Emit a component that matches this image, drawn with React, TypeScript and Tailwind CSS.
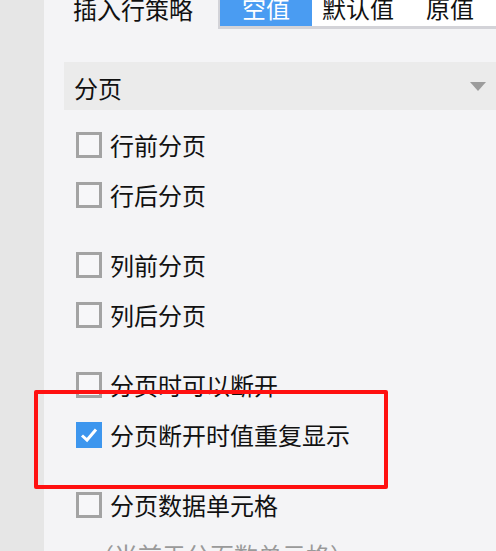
import React from 'react';

const font = { fontFamily: '"Noto Sans CJK SC", "Noto Sans", sans-serif' };

const CheckBox = ({ checked }: { checked?: boolean }) =>
    checked ? (
        <div className="w-[26px] h-[26px] bg-[#3d96ee] flex items-center justify-center flex-shrink-0">
            <svg width="18" height="16" viewBox="0 0 18 16">
                <path d="M2 8.5 L7 13 L16 2.5" stroke="white" strokeWidth="3" fill="none" />
            </svg>
        </div>
    ) : (
        <div className="w-[26px] h-[26px] border-[3px] border-[#a3a3a3] bg-[#f7f7f9] flex-shrink-0" />
    );

const Row = ({ label, checked }: { label: string; checked?: boolean }) => (
    <div className="h-[50px] flex items-center pl-[32px]">
        <CheckBox checked={checked} />
        <span className="ml-[8px] text-[24px] leading-[24px] text-[#111]">{label}</span>
    </div>
);

const Tabs = () => {
    const tabs = ['空值', '默认值', '原值'];
    return (
        <div className="ml-auto flex border-l-2 border-b-[3px] border-[#d3d3d8] bg-white">
            {tabs.map((t, i) => (
                <div
                    key={t}
                    className={
                        i === 0
                            ? 'w-[92px] h-[37px] flex items-center justify-center bg-[#4a9cf2] text-white'
                            : 'w-[92px] h-[37px] flex items-center justify-center text-[#111]'
                    }
                >
                    <span className="text-[24px] leading-[24px]">{t}</span>
                </div>
            ))}
        </div>
    );
};

export default function App() {
    return (
        <div className="relative w-[496px] h-[551px] overflow-hidden flex" style={font}>
            <div className="w-[44px] bg-[#e6e6e6] flex-shrink-0" />
            <div className="flex-1 bg-[#f4f4f6]">
                <div className="-mt-[11px] flex items-center">
                    <span className="pl-[29px] text-[24px] leading-[24px] text-[#111]">插入行策略</span>
                    <Tabs />
                </div>

                <div className="mt-[33px] ml-[20px] h-[48px] bg-[#ebebeb] flex items-center justify-between pl-[10px] pr-[10px]">
                    <span className="text-[24px] leading-[24px] text-[#111] mt-[3px]">分页</span>
                    <svg width="16" height="9" viewBox="0 0 16 9">
                        <path d="M0 0 H16 L8 9 Z" fill="#9c9c9c" />
                    </svg>
                </div>

                <div className="mt-[10px] flex flex-col gap-[20px]">
                    <div>
                        <Row label="行前分页" />
                        <Row label="行后分页" />
                    </div>
                    <div>
                        <Row label="列前分页" />
                        <Row label="列后分页" />
                    </div>
                    <div>
                        <Row label="分页时可以断开" />
                        <Row label="分页断开时值重复显示" checked />
                    </div>
                    <div>
                        <Row label="分页数据单元格" />
                        <div className="h-[50px] flex items-center pl-[46px]">
                            <span className="text-[24px] leading-[24px] text-[#9a9a9a]">（当前于分页数单元格）</span>
                        </div>
                    </div>
                </div>
            </div>

            <div className="absolute left-[34px] top-[390px] w-[354px] h-[99px] border-4 border-[#ff1010] rounded-[2px]" />
        </div>
    );
}
